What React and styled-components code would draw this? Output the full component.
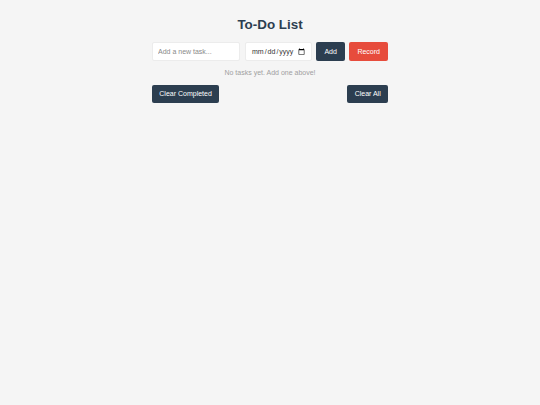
import React, { useState } from "react";
import styled, { createGlobalStyle } from "styled-components";

const Global = createGlobalStyle`
  html, body { margin: 0; padding: 0; background: #f5f5f5; }
  body { font-family: "Liberation Sans", Arial, sans-serif; }
  * { box-sizing: border-box; }
`;

const Container = styled.div`
  width: 236px;
  margin: 0 auto;
  padding-top: 16.5px;
`;

const Title = styled.h1`
  margin: 0;
  font-size: 13.4px;
  font-weight: 700;
  color: #2c3e50;
  text-align: center;
  line-height: normal;
`;

const Form = styled.div`
  display: flex;
  gap: 4.5px;
  margin-top: 10px;
  height: 19px;
`;

const TextInput = styled.input`
  flex: 1;
  min-width: 0;
  height: 19px;
  padding: 0 5px;
  border: 1px solid #ececec;
  border-radius: 2px;
  background: #fff;
  font-family: "Liberation Sans", Arial, sans-serif;
  font-size: 7px;
  color: #333;
  outline: none;
  &::placeholder { color: #8a8a8a; }
`;

const DateInput = styled.input`
  width: 67px;
  height: 19px;
  padding: 0 4px 0 5px;
  border: 1px solid #ececec;
  border-radius: 2px;
  background: #fff;
  font-family: "Liberation Sans", Arial, sans-serif;
  font-size: 7px;
  color: #333;
  outline: none;
`;

const Button = styled.button`
  height: ${(p) => (p.$small ? "17.5px" : "19px")};
  padding: 0 ${(p) => (p.$small ? "7.3px" : "8px")};
  border: none;
  border-radius: 2px;
  background: ${(p) => (p.$danger ? "#e74c3c" : "#2c3e50")};
  color: #fff;
  font-family: "Liberation Sans", Arial, sans-serif;
  font-size: 7px;
  cursor: pointer;
  white-space: nowrap;
`;

const Empty = styled.p`
  margin: 8px 0 0;
  font-size: 7px;
  line-height: normal;
  color: #a0a0a0;
  text-align: center;
`;

const Footer = styled.div`
  display: flex;
  justify-content: space-between;
  margin-top: 9.5px;
`;

export default function App() {
  const [task, setTask] = useState("");
  return (
    <>
      <Global />
      <Container>
        <Title>To-Do List</Title>
        <Form>
          <TextInput
            placeholder="Add a new task..."
            value={task}
            onChange={(e) => setTask(e.target.value)}
          />
          <DateInput type="date" />
          <Button>Add</Button>
          <Button $danger>Record</Button>
        </Form>
        <Empty>No tasks yet. Add one above!</Empty>
        <Footer>
          <Button $small>Clear Completed</Button>
          <Button $small>Clear All</Button>
        </Footer>
      </Container>
    </>
  );
}
